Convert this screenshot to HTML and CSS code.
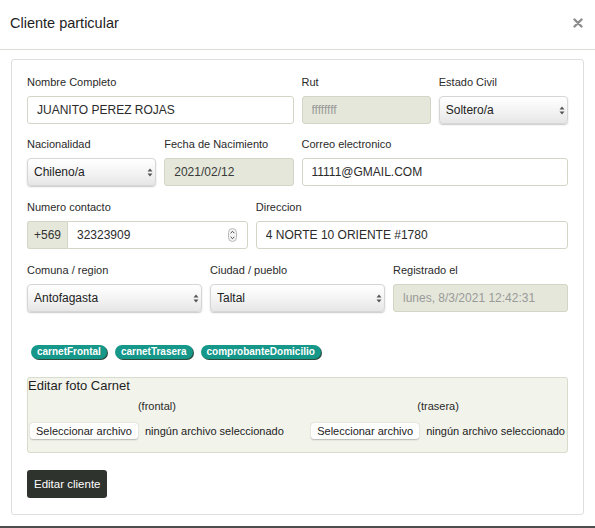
FILE: index.html
```html
<!DOCTYPE html>
<html lang="es">
<head>
<meta charset="utf-8">
<title>Cliente particular</title>
<link rel="stylesheet" href="styles.css">
</head>
<body>
<div class="modal">
  <header class="modal-head">
    <h1 class="modal-title">Cliente particular</h1>
    <button class="close" type="button" aria-label="Cerrar">
      <svg width="10" height="10" viewBox="0 0 10 10"><path d="M1.5 1.5 L8.5 8.5 M8.5 1.5 L1.5 8.5" stroke="#8c8c8c" stroke-width="2.4" stroke-linecap="round"/></svg>
    </button>
  </header>
  <div class="modal-body">
    <form class="card">
      <div class="row">
        <div class="field span-6">
          <label class="lbl">Nombre Completo</label>
          <input class="ctl" type="text" value="JUANITO PEREZ ROJAS">
        </div>
        <div class="field span-3">
          <label class="lbl">Rut</label>
          <input class="ctl ctl-disabled ctl-muted" type="text" value="ffffffff" disabled>
        </div>
        <div class="field span-3">
          <label class="lbl">Estado Civil</label>
          <div class="sel-wrap">
            <select class="sel"><option>Soltero/a</option></select>
            <svg class="sel-arrow" width="6" height="9" viewBox="0 0 6 9"><path d="M3 0.5 L5.5 3.5 L0.5 3.5 Z M3 8.5 L5.5 5.5 L0.5 5.5 Z" fill="#555"/></svg>
          </div>
        </div>
      </div>
      <div class="row">
        <div class="field span-3">
          <label class="lbl">Nacionalidad</label>
          <div class="sel-wrap">
            <select class="sel"><option>Chileno/a</option></select>
            <svg class="sel-arrow" width="6" height="9" viewBox="0 0 6 9"><path d="M3 0.5 L5.5 3.5 L0.5 3.5 Z M3 8.5 L5.5 5.5 L0.5 5.5 Z" fill="#555"/></svg>
          </div>
        </div>
        <div class="field span-3">
          <label class="lbl">Fecha de Nacimiento</label>
          <input class="ctl ctl-disabled" type="text" value="2021/02/12" disabled>
        </div>
        <div class="field span-6">
          <label class="lbl">Correo electronico</label>
          <input class="ctl" type="text" value="11111@GMAIL.COM">
        </div>
      </div>
      <div class="row">
        <div class="field span-5">
          <label class="lbl">Numero contacto</label>
          <div class="group">
            <span class="addon">+569</span>
            <div class="num-wrap">
              <input class="ctl ctl-group" type="text" value="32323909">
              <svg class="spin" width="9" height="14" viewBox="0 0 9 14"><rect x="0.5" y="0.5" width="8" height="13" rx="4" fill="#f4f4f4" stroke="#b9b9b9"/><path d="M2.6 5.2 L4.5 3.3 L6.4 5.2 M2.6 8.8 L4.5 10.7 L6.4 8.8" fill="none" stroke="#444" stroke-width="1"/></svg>
            </div>
          </div>
        </div>
        <div class="field span-7">
          <label class="lbl">Direccion</label>
          <input class="ctl" type="text" value="4 NORTE 10 ORIENTE #1780">
        </div>
      </div>
      <div class="row row-last">
        <div class="field span-4">
          <label class="lbl">Comuna / region</label>
          <div class="sel-wrap">
            <select class="sel"><option>Antofagasta</option></select>
            <svg class="sel-arrow" width="6" height="9" viewBox="0 0 6 9"><path d="M3 0.5 L5.5 3.5 L0.5 3.5 Z M3 8.5 L5.5 5.5 L0.5 5.5 Z" fill="#555"/></svg>
          </div>
        </div>
        <div class="field span-4">
          <label class="lbl">Ciudad / pueblo</label>
          <div class="sel-wrap">
            <select class="sel"><option>Taltal</option></select>
            <svg class="sel-arrow" width="6" height="9" viewBox="0 0 6 9"><path d="M3 0.5 L5.5 3.5 L0.5 3.5 Z M3 8.5 L5.5 5.5 L0.5 5.5 Z" fill="#555"/></svg>
          </div>
        </div>
        <div class="field span-4">
          <label class="lbl">Registrado el</label>
          <input class="ctl ctl-disabled ctl-muted" type="text" value="lunes, 8/3/2021 12:42:31" disabled>
        </div>
      </div>

      <div class="badges">
        <span class="badge">carnetFrontal</span>
        <span class="badge">carnetTrasera</span>
        <span class="badge">comprobanteDomicilio</span>
      </div>

      <fieldset class="files">
        <legend class="files-title">Editar foto Carnet</legend>
        <div class="files-row">
          <div class="file-block">
            <div class="file-cap">(frontal)</div>
            <div class="file-input"><span class="file-btn">Seleccionar archivo</span><span class="file-txt">ningún archivo seleccionado</span></div>
          </div>
          <div class="file-block">
            <div class="file-cap">(trasera)</div>
            <div class="file-input"><span class="file-btn">Seleccionar archivo</span><span class="file-txt">ningún archivo seleccionado</span></div>
          </div>
        </div>
      </fieldset>

      <button class="submit" type="button">Editar cliente</button>
    </form>
  </div>
  <div class="edge"></div>
</div>
</body>
</html>
```

FILE: styles.css
```css
* { box-sizing: border-box; }
html, body { margin: 0; padding: 0; background: #fff; }
body {
  font-family: "Liberation Sans", Arial, sans-serif;
  color: #222;
}
.modal { width: 595px; height: 528px; display: flex; flex-direction: column; }
.modal-head {
  height: 50px;
  border-bottom: 1px solid #dcdfd1;
  display: flex;
  align-items: center;
  justify-content: space-between;
  padding: 0 10px 4px 10px;
}
.modal-title { margin: 0; font-size: 14.5px; font-weight: normal; color: #1e1e1e; }
.close { border: 0; background: none; padding: 0; margin: 0 2px 0 0; display: flex; }
.modal-body { flex: 1; padding: 9px 11px 11px 11px; }
.card {
  border: 1px solid #dedede;
  border-radius: 3px;
  padding: 15px 15px 15px 15px;
  height: 456px;
}
.row {
  display: grid;
  grid-template-columns: repeat(12, 1fr);
  column-gap: 8px;
  margin-bottom: 14px;
}
.row:first-child { margin-bottom: 13px; }
.row-last { margin-bottom: 0; }
.span-3 { grid-column: span 3; }
.span-4 { grid-column: span 4; }
.span-5 { grid-column: span 5; }
.span-6 { grid-column: span 6; }
.span-7 { grid-column: span 7; }
.field { display: flex; flex-direction: column; min-width: 0; }
.lbl { font-size: 11px; line-height: 14px; color: #2a2a2a; margin-bottom: 7px; }
.ctl {
  height: 28px;
  width: 100%;
  border: 1px solid #d3d6c6;
  border-radius: 3px;
  background: #fff;
  font-family: inherit;
  font-size: 12px;
  color: #2b2b2b;
  padding: 0 9px;
  margin: 0;
  outline: none;
}
.ctl-disabled { background: #e4e7d9; color: #3a3a3a; }
.ctl-muted { color: #9a9a9a; }
.sel-wrap { position: relative; height: 28px; }
.sel {
  appearance: none;
  -webkit-appearance: none;
  width: 100%;
  height: 28px;
  border: 1px solid #d6d6d6;
  border-radius: 4px;
  background: linear-gradient(#ffffff, #f3f3f3 55%, #e6e6e6);
  box-shadow: 0 1px 1.5px rgba(0,0,0,0.22);
  font-family: inherit;
  font-size: 12px;
  color: #222;
  padding: 0 6px;
  margin: 0;
}
.sel-arrow { position: absolute; right: 3px; top: 10px; pointer-events: none; }
.group { display: flex; height: 28px; }
.addon {
  width: 40px;
  flex: none;
  display: flex;
  align-items: center;
  justify-content: center;
  background: #e4e7d9;
  border: 1px solid #d3d6c6;
  border-right: 0;
  border-radius: 3px 0 0 3px;
  font-size: 12px;
  color: #333;
}
.num-wrap { position: relative; flex: 1; }
.ctl-group { border-radius: 0 3px 3px 0; }
.spin { position: absolute; right: 11px; top: 7px; }
.badges { display: flex; gap: 8px; margin: 33px 0 0 4px; }
.badge {
  background: #15978a;
  color: #fff;
  font-size: 10px;
  font-weight: bold;
  line-height: 13px;
  height: 14px;
  padding: 0 6px;
  border-radius: 7px;
  box-shadow: 1px 1px 0 #2d4a3c;
}
.files {
  margin: 18px 0 0 0;
  padding: 0 2px 0 2px;
  border: 1px solid #d8dccd;
  border-radius: 3px;
  background: #f2f4ec;
  height: 76px;
  display: block;
}
.files-title {
  float: left;
  width: 100%;
  padding: 0;
  margin: 0 0 0 -2px;
  font-size: 13px;
  line-height: 15px;
  color: #1d1d1d;
}
.files-row { clear: both; display: flex; justify-content: space-between; padding-top: 6px; }
.file-block { display: flex; flex-direction: column; align-items: center; }
.file-cap { font-size: 11px; line-height: 14px; color: #2a2a2a; margin-bottom: 10px; }
.file-input { display: flex; align-items: center; gap: 7px; font-size: 11px; color: #222; }
.file-btn {
  background: #fff;
  border-radius: 3px;
  box-shadow: 0 0.5px 1.5px rgba(0,0,0,0.25);
  padding: 1px 6px;
  line-height: 14px;
}
.file-txt { line-height: 14px; }
.submit {
  margin-top: 17px;
  height: 28px;
  padding: 0 7px;
  border: 0;
  border-radius: 3px;
  background: #2f332d;
  color: #fff;
  font-family: inherit;
  font-size: 11.5px;
}
.edge { height: 2px; background: #4d4d4d; }
```
